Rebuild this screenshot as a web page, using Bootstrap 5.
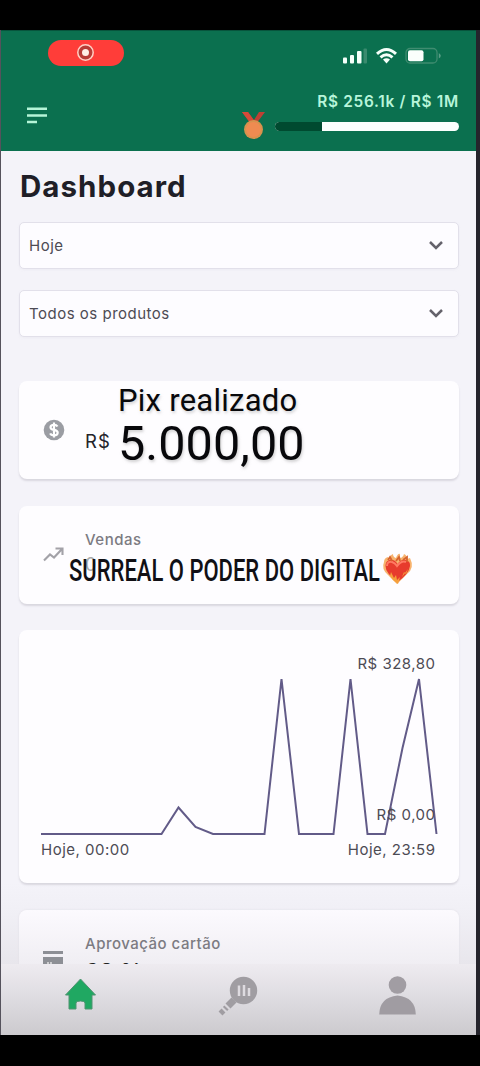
<!DOCTYPE html>
<html lang="pt-BR">
<head>
<meta charset="utf-8">
<meta name="viewport" content="width=device-width, initial-scale=1">
<title>Dashboard</title>
<link href="https://cdn.jsdelivr.net/npm/bootstrap@5.3.0/dist/css/bootstrap.min.css" rel="stylesheet">
<style>
body{background:#000;font-family:Inter,"Liberation Sans",sans-serif;color:#4d4b54;font-size:15px;line-height:20px;letter-spacing:.5px;height:1066px;overflow:hidden}
svg{display:block;overflow:visible}
.frame{margin-top:30px;height:1005px;padding:0 4px 0 1px;background:linear-gradient(90deg,#55525c 0,#55525c 50%,#25242c 50%)}
.screen{height:1005px;background:#f4f3f9;overflow:hidden}
.topbar{height:121px;background:#0b704f;border-top:1px solid #07543c;padding:8px 17px 0 19px}
.status{height:36px;padding:0 18px 0 28px}
.rec{width:76px;height:26px;background:#ff3d39;margin-top:1px}
.goal{width:184px;color:#b7f5da;font-weight:600;font-size:15.4px;letter-spacing:.72px}
.goal-track{height:9px;background:#fbfffd;border-radius:5px;margin-top:10px}
.goal-track .progress-bar{background:#004a30}
.main{padding:0 17.5px 0 18px}
h1{font-size:29.5px;line-height:36px;font-weight:700;color:#1f1e27;margin:17px 0 18px 1px;letter-spacing:1.05px}
.pick{height:47px;background:#fdfcff;border:1px solid #e2e0ea;border-radius:5px;padding:0 15px 0 9px;color:#4d4b54;box-shadow:0 1px 2px #dedce644}
.panel{background:#fefdff;border-radius:8px;box-shadow:0 2px 2px #d9d7df}
.metric{height:98px;padding-left:24px}
.metric>svg{flex:none}
.muted{color:#7c7b82;font-weight:500}
.currency{margin:50px 0 0 20px;width:33px;font-size:18.5px;letter-spacing:1px;color:#24232a}
.pix{font-family:Roboto,sans-serif;color:#08080b;letter-spacing:0;text-shadow:1px 2px 3px #aaa8;white-space:nowrap;padding-top:2px}
.pix-title{font-size:31px;line-height:36px;letter-spacing:.25px}
.pix-value{font-size:48.5px;line-height:50px;letter-spacing:.1px}
.caption{left:50px;top:48px}
.plot{height:253px;padding:24px 23px 0 22px}
.plot>svg{left:0;top:0}
.last{border-radius:8px 8px 0 0;background:linear-gradient(#fcfafe,#f0eef3);box-shadow:0 0 2px #dddbe2;overflow:hidden}
.last.metric{height:54px}
.rest{height:81px;padding-top:27px;background:linear-gradient(#f4f3f9,#f0eff5 40%,#e8e6ec)}
.tabs{height:72px;background:linear-gradient(#eeebf0,#dfdde2 45%,#cccace);padding:12px 60px 0 63px;border-bottom:1px solid #aaa8b0}
</style>
</head>
<body>
<div class="frame">
<div class="screen">
  <header class="topbar">
    <div class="status d-flex justify-content-between">
      <div class="rec rounded-pill d-flex align-items-center justify-content-center">
        <svg width="18" height="18" viewBox="0 0 18 18"><circle cx="8.500" cy="8.500" r="7.700" fill="#b83c36" stroke="#ffd0c5" stroke-width="1.500"/><circle cx="8.500" cy="8.500" r="3.500" fill="#fff0e6"/></svg>
      </div>
      <svg width="98" height="18" viewBox="0 0 98 18" style="margin-top:8px">
        <g fill="#f5fffa"><rect x="0" y="10.500" width="4" height="6" rx="1"/><rect x="7" y="8" width="4" height="8.500" rx="1"/><rect x="14" y="4" width="4.500" height="12.500" rx="1"/></g>
        <rect x="20.500" y="1.500" width="3.500" height="15" rx="1" fill="#3a8a6e"/>
        <g fill="none" stroke="#f5fffa" stroke-width="3"><path d="M34 6.800Q43.500-1.800 53 6.800"/><path d="M37.500 10.300q6-5 12 0"/></g><path d="M40 12.500q3.500-2.600 7 0l-3.500 4z" fill="#f5fffa"/>
        <rect x="63" y="1.500" width="31" height="14.500" rx="4" fill="none" stroke="#3f8c70" stroke-width="1.300"/><rect x="65" y="3.300" width="15.500" height="11" rx="2" fill="#fafffc"/><path d="M95.800 6v5.500q4-2.700 0-5.500" fill="#5b9e87"/>
      </svg>
    </div>
    <div class="d-flex">
      <svg class="me-auto" width="34" height="30" viewBox="0 0 34 30" style="margin-top:17px"><g stroke="#b5f5d8" stroke-width="2.600"><path d="M7 16.800H27M7 23.500H27M7 30H17"/></g></svg>
      <svg width="24" height="30" viewBox="0 0 24 30" style="margin:36px 10px 0 0"><path d="M1 1h6l6 8 5-8h6l-9 12h-5z" fill="#bd4034"/><path d="M1 1h6l7 10-4 2z" fill="#d54a39"/><circle cx="12.500" cy="18.500" r="9.500" fill="#d7924d"/><circle cx="12.500" cy="18.500" r="7.400" fill="#ef8b51"/></svg>
      <div class="goal text-end" style="margin-top:17px">
        <div class="text-nowrap">R$ 256.1k / R$ 1M</div>
        <div class="progress goal-track"><div class="progress-bar" style="width:25.6%"></div></div>
      </div>
    </div>
  </header>
  <main class="main">
    <h1>Dashboard</h1>
    <div class="pick d-flex align-items-center justify-content-between"><span>Hoje</span><svg width="14" height="9" viewBox="0 0 14 9"><path d="M1 1 7 7l6-6" fill="none" stroke="#64626b" stroke-width="2.500"/></svg></div>
    <div class="pick d-flex align-items-center justify-content-between" style="margin-top:21px"><span>Todos os produtos</span><svg width="14" height="9" viewBox="0 0 14 9"><path d="M1 1 7 7l6-6" fill="none" stroke="#64626b" stroke-width="2.500"/></svg></div>
    <section class="panel metric d-flex" style="margin-top:44px">
      <svg width="22" height="22" viewBox="0 0 22 22" style="margin-top:38px"><circle cx="11" cy="11" r="10.300" fill="#9b9da3"/><path d="M14.500 7.500q-1-1.700-3.500-1.700-3.500 0-3.500 2.400 0 2 3.500 2.700 3.700.7 3.700 2.900 0 2.600-3.700 2.600-2.900 0-3.800-2M11 3.500v15" fill="none" stroke="#fff" stroke-width="2.200"/></svg>
      <div class="currency">R$</div>
      <div class="pix"><div class="pix-title">Pix realizado</div><div class="pix-value">5.000,00</div></div>
    </section>
    <section class="panel metric d-flex position-relative" style="margin-top:26.500px">
      <svg width="22" height="16" viewBox="0 0 22 16" style="margin-top:40px"><path d="M1 14.500 7 8.500l4 3 8-8.500M12.500 2.500h7V9" fill="none" stroke="#a3a2a8" stroke-width="2.100"/></svg>
      <div style="margin:24px 0 0 20px"><div class="muted">Vendas</div><div style="font-size:18px;line-height:30px;color:#aaa">0</div></div>
      <div class="caption position-absolute">
        <svg width="344" height="34" viewBox="0 0 344 34">
          <text x="0" y="26.500" textLength="311" lengthAdjust="spacingAndGlyphs" font-family="Roboto" font-weight="500" font-size="31.500" letter-spacing="0" fill="#111015">SURREAL O PODER DO DIGITAL</text>
          <path d="M315 8q0-4 4-5 1 2 2 1 0-3 3-4 0 3 3 4 2-5 4-4-1 3 1 4 3-2 3-4 3 1 3 5l3-1q5 10-3 16l-10 10-9-9q-7-6-4-13" fill="#f7b36e"/>
          <path d="M328.500 28q-12-9-12-16 0-5 4-6 5-1 8 4 4-5 8-4 5 1 4.500 6-1 8-12.500 16" fill="#e73b2d"/><path d="M318 12q0-5 5-4 3 1 5 4 5-6 9-4" fill="none" stroke="#ff7a63" stroke-width="2"/>
          <path d="m319 19 2 3 1-4 3 6 2-3 1 5 3-3-2 7-5-4zM339 15l-2 5-2-2-2 5" fill="#f5a03b"/><path d="m319 6 2-3 2 4m4 0 3-4 1 4m3-1 4-3 0 5" fill="none" stroke="#d6642f" stroke-width="1.800"/>
        </svg>
      </div>
    </section>
    <section class="panel plot position-relative d-flex flex-column" style="margin-top:26px">
      <svg class="position-absolute" width="439" height="253" viewBox="0 0 439 253"><path d="M22 204H142.500L159.500 177.500 176.500 197 194 204H245.500L262.500 49 280 204H314.500L331.500 49 348.500 204H366L383.500 118 400 49 417.500 204" fill="none" stroke="#625b88" stroke-width="2"/></svg>
      <div class="text-end position-relative">R$ 328,80</div>
      <div class="text-end position-relative" style="margin-top:131px">R$ 0,00</div>
      <div class="d-flex justify-content-between" style="margin-top:15px"><span>Hoje, 00:00</span><span>Hoje, 23:59</span></div>
    </section>
  </main>
  <div class="rest main">
    <section class="last metric d-flex">
      <svg width="22" height="16" viewBox="0 0 22 16" style="margin-top:40px"><path d="M0 1h20v3H0zM0 7h20v9H0z" fill="#8d8f95"/><path d="M5 12v4m3-4v4m4-2v2" stroke="#eee" stroke-width="1.300"/></svg>
      <div style="margin:24px 0 0 20px"><div class="muted">Aprovação cartão</div><div style="font-size:22px;line-height:30px;margin-top:2px;color:#222;font-weight:600">68 %</div></div>
    </section>
  </div>
  <nav class="tabs d-flex justify-content-between">
    <svg width="32" height="34" viewBox="0 0 32 34"><path d="M1.500 19 16.500 3l15 16h-3.500v14H21v-6q0-2-4.500-2t-4.500 2v6H5V19z" fill="#20a862" stroke="#4f9371" stroke-width="1"/></svg>
    <svg width="40" height="42" viewBox="0 0 40 42"><circle cx="26.500" cy="14.500" r="13.700" fill="#a09da2"/><path d="M22 9.500V20m5-11v11m5-8v8" stroke="#dedbe0" stroke-width="2.500"/><path d="m17 24-6 6" stroke="#a09da2" stroke-width="7"/><path d="m9.500 31.500-1.500 1.500" stroke="#a09da2" stroke-width="6"/><path d="m6.500 34.500-3 3" stroke="#a09da2" stroke-width="5.500"/></svg>
    <svg width="38" height="40" viewBox="0 0 38 40"><circle cx="19.500" cy="9" r="8.800" fill="#a19da3"/><path d="M1.200 38.500Q1.500 21.500 19.500 19.500q18 2 18.300 19z" fill="#a09ca2"/></svg>
  </nav>
</div>
</div>
<script src="https://cdn.jsdelivr.net/npm/bootstrap@5.3.0/dist/js/bootstrap.bundle.min.js"></script>
</body>
</html>
